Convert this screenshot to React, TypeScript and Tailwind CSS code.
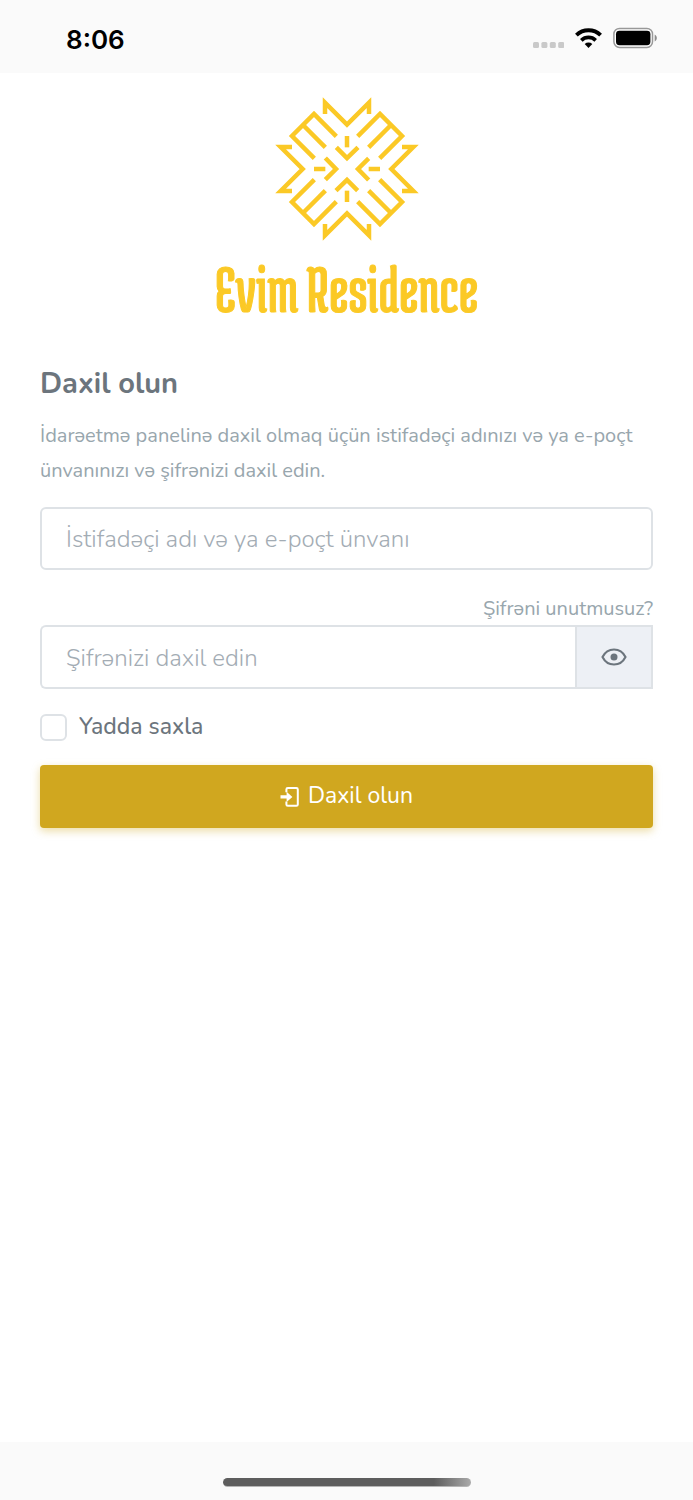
import { useState } from "react";

const GOLD = "#fbc926";

function LogoMark() {
  return (
    <svg viewBox="26 26 432 432" className="size-36" fill="none" stroke={GOLD} strokeWidth="13.5" aria-hidden="true">
      {[0, 90, 180, 270].map((angle) => (
        <g key={angle} transform={`rotate(${angle} 242 242)`}>
          <path d="M176 77V43L242 109L308 43V77" />
          <path d="M210 144L143 77L77 143L144 210" />
          <path d="M110 110L177 177" />
          <path d="M210 177L242 209L275 177" />
          <path d="M242 143V177" />
        </g>
      ))}
    </svg>
  );
}

function StatusBar() {
  return (
    <header className="flex h-[73px] shrink-0 items-center justify-between bg-[#fafafa] pt-1 pr-9 pl-[66px] text-black">
      <time className="pt-0.5 font-['Inter',sans-serif] text-[26px] font-semibold">8:06</time>
      <div className="flex items-center gap-[11px] pb-0.5">
        <svg viewBox="0 0 31 22" className="h-[22px] w-[31px]" fill="#c9c9c9" aria-hidden="true">
          <rect x="0" y="15" width="6" height="6" rx="1.5" />
          <rect x="8.4" y="15" width="6" height="6" rx="1.5" />
          <rect x="16.8" y="15" width="6" height="6" rx="1.5" />
          <rect x="25.2" y="15" width="6" height="6" rx="1.5" />
        </svg>
        <svg viewBox="0 0 27 20" className="h-5 w-[27px]" aria-hidden="true">
          <path d="M13.5 20L9.7 16.1a5.6 5.6 0 0 1 7.6 0z" fill="#000" />
          <path d="M6.3 12.3a10.4 10.4 0 0 1 14.4 0" fill="none" stroke="#000" strokeWidth="3.7" />
          <path d="M1.4 7.2a17.4 17.4 0 0 1 24.2 0" fill="none" stroke="#000" strokeWidth="3.9" />
        </svg>
        <svg viewBox="0 0 44 22" className="h-[22px] w-11" aria-hidden="true">
          <rect x="0.9" y="1.4" width="38.6" height="19" rx="5.6" fill="#fff" stroke="#989898" strokeWidth="1.5" />
          <rect x="3" y="3.8" width="34.4" height="14.4" rx="3.4" fill="#000" />
          <path d="M41.7 7.6c2.8 1.4 2.8 5.4 0 6.8z" fill="#8d8d8d" />
        </svg>
      </div>
    </header>
  );
}

export default function App() {
  const [visible, setVisible] = useState(false);

  return (
    <div className="flex min-h-screen flex-col bg-white font-['Nunito','Lato','Noto_Sans',sans-serif] text-[#6c757d]">
      <StatusBar />
      <main className="flex grow flex-col px-10 pt-6">
        <div className="flex flex-col items-center gap-4 text-[#fbc926]">
          <LogoMark />
          <p className="font-['Medula_One','Oswald','Liberation_Sans',sans-serif] text-[68px] leading-[64px] whitespace-nowrap [-webkit-text-stroke:1px_#fbc926]">
            Evim Residence
          </p>
        </div>

        <form className="flex flex-col" onSubmit={(event) => event.preventDefault()}>
          <h1 className="mt-[43px] text-[29px] leading-10 font-bold">Daxil olun</h1>
          <p className="mt-[14px] text-xl leading-[35px] text-[#98a6ad]">
            İdarəetmə panelinə daxil olmaq üçün istifadəçi adınızı və ya e-poçt ünvanınızı və şifrənizi daxil edin.
          </p>
          <input
            type="text"
            aria-label="İstifadəçi adı və ya e-poçt ünvanı"
            placeholder="İstifadəçi adı və ya e-poçt ünvanı"
            className="mt-[19px] h-[63px] w-full rounded-md border-2 border-[#dee2e6] bg-white px-6 text-2xl font-light outline-none placeholder:text-[#a3acb4]"
          />
          <a href="#" className="mt-[23px] self-end text-xl leading-8 text-[#98a6ad]">
            Şifrəni unutmusuz?
          </a>
          <div className="flex h-16">
            <input
              type={visible ? "text" : "password"}
              aria-label="Şifrənizi daxil edin"
              placeholder="Şifrənizi daxil edin"
              className="min-w-0 grow rounded-l-md border-2 border-r-0 border-[#dee2e6] bg-white px-6 pt-0.5 text-2xl font-light outline-none placeholder:text-[#a3acb4]"
            />
            <button
              type="button"
              aria-label="Şifrəni göstər"
              onClick={() => setVisible(!visible)}
              className="flex w-[78px] items-center justify-center border-2 border-[#dee2e6] bg-[#edf0f5]"
            >
              <svg viewBox="0 0 26 18" className="h-[18px] w-[26px]" aria-hidden="true">
                <path
                  d="M1.5 9C3.9 4.2 8 1.5 13 1.5S22.1 4.2 24.5 9C22.1 13.8 18 16.5 13 16.5S3.9 13.8 1.5 9z"
                  fill="none"
                  stroke="#6c757d"
                  strokeWidth="2.1"
                />
                <circle cx="13" cy="9" r="3.5" fill="#6c757d" />
              </svg>
            </button>
          </div>
          <label className="mt-5 flex items-center gap-3 self-start text-[23px] leading-9 font-medium">
            <input
              type="checkbox"
              className="size-[27px] appearance-none rounded-md border-2 border-[#dee2e6] bg-white checked:bg-[#d0a71f]"
            />
            Yadda saxla
          </label>
          <button
            type="submit"
            className="mt-5 flex h-[63px] items-center justify-center gap-2 rounded-[4px] bg-[#d0a71f] text-[23px] text-white shadow-[0_3px_9px_rgba(208,167,31,0.4)]"
          >
            <svg viewBox="0 0 20 20" className="size-5" aria-hidden="true">
              <path
                d="M6.4 5.2V2.4Q6.4 1 7.8 1H16.4Q17.8 1 17.8 2.4V17.4Q17.8 18.8 16.4 18.8H7.8Q6.4 18.8 6.4 17.4V14.6"
                fill="none"
                stroke="#fff"
                strokeWidth="2"
              />
              <path d="M0.5 8.3H6.6V4.8L12.4 9.9L6.6 15V11.5H0.5z" fill="#fff" />
            </svg>
            Daxil olun
          </button>
        </form>
      </main>
      <footer className="flex h-[58px] shrink-0 items-end justify-center bg-[#fafafa] pb-[13px]">
        <div className="h-[9px] w-[248px] rounded-full border-b border-[#b5b5b5] bg-linear-to-r from-[#5d5d5d] from-85% to-[#aaaaaa]" />
      </footer>
    </div>
  );
}
